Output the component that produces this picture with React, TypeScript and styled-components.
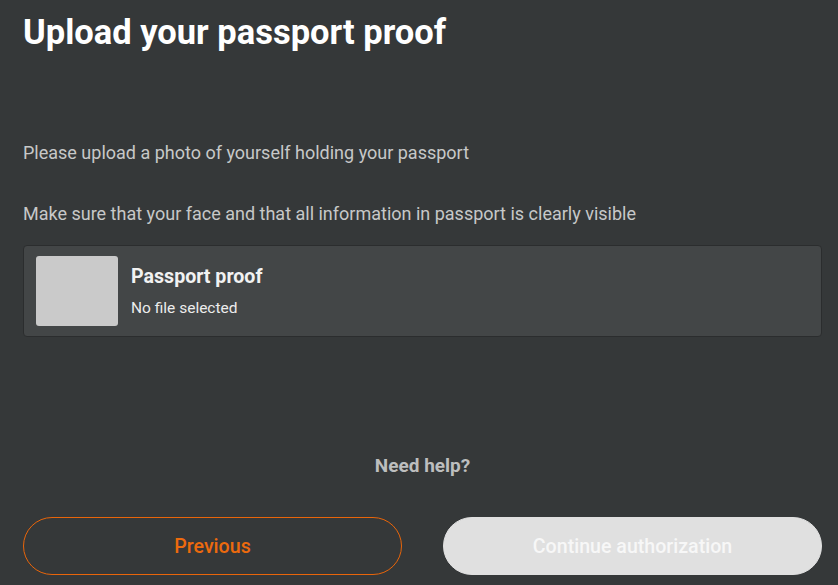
import React from "react";
import styled, { createGlobalStyle } from "styled-components";

const Global = createGlobalStyle`
  html, body { margin: 0; padding: 0; background: #353839; }
  body { font-family: Roboto, "Liberation Sans", sans-serif; }
  * { box-sizing: border-box; }
`;

const Page = styled.div`
  width: 838px;
  height: 585px;
  background: #353839;
  padding: 12px 16px 0 23px;
  display: flex;
  flex-direction: column;
`;

const Title = styled.h1`
  margin: 0;
  font-size: 34.5px;
  line-height: 40px;
  font-weight: 700;
  color: #ffffff;
`;

const Paragraph = styled.p<{ $top: number }>`
  margin: ${(p) => p.$top}px 0 0;
  font-size: 18px;
  line-height: 22px;
  color: #c7c8c8;
`;

const Card = styled.div`
  margin-top: 20px;
  height: 92px;
  background: #434647;
  border: 1px solid #2b2d2e;
  border-radius: 4px;
  display: flex;
  align-items: center;
  padding: 0 12px;
  gap: 13px;
`;

const Thumb = styled.div`
  width: 82px;
  height: 70px;
  background: #cacaca;
  border-radius: 3px;
`;

const CardText = styled.div`
  display: flex;
  flex-direction: column;
  gap: 10px;
`;

const CardTitle = styled.div`
  font-size: 19.6px;
  line-height: 24px;
  font-weight: 700;
  color: #f2f2f2;
`;

const CardSub = styled.div`
  font-size: 15.5px;
  line-height: 18px;
  color: #ececec;
`;

const Help = styled.div`
  margin-top: 118px;
  text-align: center;
  font-size: 19px;
  line-height: 22px;
  font-weight: 700;
  color: #bdbebe;
`;

const Buttons = styled.div`
  margin-top: 40px;
  display: grid;
  grid-template-columns: 1fr 1fr;
  gap: 41px;
`;

const Button = styled.button<{ $primary?: boolean }>`
  height: 58px;
  border-radius: 29px;
  font-family: inherit;
  font-size: 19.6px;
  font-weight: 500;
  cursor: pointer;
  border: 1px solid ${(p) => (p.$primary ? "#e0e0e0" : "#e8650a")};
  background: ${(p) => (p.$primary ? "#e0e0e0" : "transparent")};
  color: ${(p) => (p.$primary ? "#f7f7f7" : "#ec6a0e")};
`;

export default function App() {
  return (
    <Page>
      <Global />
      <Title>Upload your passport proof</Title>
      <Paragraph $top={90}>Please upload a photo of yourself holding your passport</Paragraph>
      <Paragraph $top={39}>Make sure that your face and that all information in passport is clearly visible</Paragraph>
      <Card>
        <Thumb />
        <CardText>
          <CardTitle>Passport proof</CardTitle>
          <CardSub>No file selected</CardSub>
        </CardText>
      </Card>
      <Help>Need help?</Help>
      <Buttons>
        <Button>Previous</Button>
        <Button $primary>Continue authorization</Button>
      </Buttons>
    </Page>
  );
}
